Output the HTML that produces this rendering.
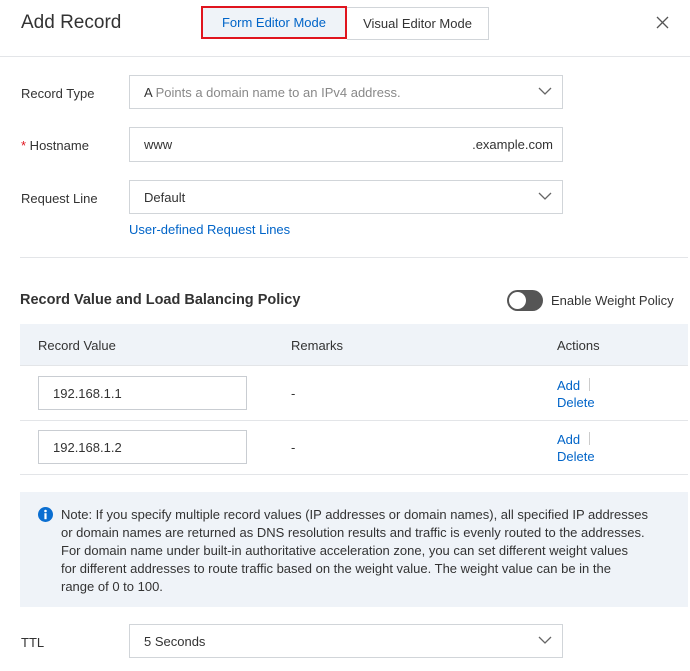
<!DOCTYPE html>
<html><head><style>
*{box-sizing:border-box;margin:0;padding:0}
body{width:690px;height:671px;overflow:hidden;background:#fff;font-family:"Liberation Sans",sans-serif;font-size:13px;color:#333;position:relative}
.a{position:absolute;white-space:nowrap}
.sel{position:absolute;left:129px;width:434px;height:34px;border:1px solid #d1d5d9;background:#fff}
.sel span{position:absolute;left:14px;top:9px}
.chev{position:absolute;right:10px;top:10px;width:14px;height:10px}
.lbl{position:absolute;left:21px}
.link{color:#0064c8}
.inp{position:absolute;left:38px;width:209px;height:34px;border:1px solid #c9cdd2;background:#fff}
.inp span{position:absolute;left:14px;top:9px}
.hr{position:absolute;left:20px;width:668px;height:1px;background:#e3e5e8}
</style></head><body>
<div class="a" style="left:21px;top:12px;font-size:19px;color:#333">Add Record</div>
<div class="a" style="left:347px;top:7px;width:142px;height:33px;border:1px solid #d1d5d9;border-left:none;text-align:center;line-height:31px;color:#333">Visual Editor Mode</div>
<div class="a" style="left:201px;top:6px;width:146px;height:33px;border:2px solid #e0141e;background:#eff3f8;text-align:center;line-height:29px;color:#0064c8">Form Editor Mode</div>
<svg class="a" style="left:656px;top:16px" width="13" height="13" viewBox="0 0 13 13"><path d="M1 1L12 12M12 1L1 12" stroke="#555" stroke-width="1.3"/></svg>
<div class="a" style="left:0;top:56px;width:690px;height:1px;background:#e3e5e8"></div>

<div class="lbl a" style="top:86px">Record Type</div>
<div class="sel" style="top:75px"><span><span style="position:static;color:#333">A</span> <span style="position:static;color:#888">Points a domain name to an IPv4 address.</span></span><svg class="chev" viewBox="0 0 14 10"><path d="M1 2l6 6 6-6" fill="none" stroke="#666" stroke-width="1.3"/></svg></div>

<div class="lbl a" style="top:138px"><span style="color:#e0141e">*</span> Hostname</div>
<div class="sel" style="top:127px;height:35px"><span>www</span><span style="left:auto;right:9px">.example.com</span></div>

<div class="lbl a" style="top:191px">Request Line</div>
<div class="sel" style="top:180px"><span>Default</span><svg class="chev" viewBox="0 0 14 10"><path d="M1 2l6 6 6-6" fill="none" stroke="#666" stroke-width="1.3"/></svg></div>
<div class="a link" style="left:129px;top:222px">User-defined Request Lines</div>
<div class="hr" style="top:257px"></div>

<div class="a" style="left:20px;top:292px;font-size:14.5px;font-weight:bold;color:#333">Record Value and Load Balancing Policy</div>
<div class="a" style="left:507px;top:290px;width:36px;height:21px;border-radius:11px;background:#555"></div>
<div class="a" style="left:509px;top:292px;width:17px;height:17px;border-radius:50%;background:#fff"></div>
<div class="a" style="left:551px;top:293px">Enable Weight Policy</div>

<div class="a" style="left:20px;top:324px;width:668px;height:42px;background:#eff3f8;border-bottom:1px solid #e3e5e8"></div>
<div class="a" style="left:38px;top:338px">Record Value</div>
<div class="a" style="left:291px;top:338px">Remarks</div>
<div class="a" style="left:557px;top:338px">Actions</div>

<div class="inp" style="top:376px"><span>192.168.1.1</span></div>
<div class="a" style="left:291px;top:386px">-</div>
<div class="a link" style="left:557px;top:378px">Add</div>
<div class="a" style="left:589px;top:378px;width:1px;height:13px;background:#ccc"></div>
<div class="a link" style="left:557px;top:395px">Delete</div>
<div class="hr" style="top:420px"></div>

<div class="inp" style="top:430px"><span>192.168.1.2</span></div>
<div class="a" style="left:291px;top:440px">-</div>
<div class="a link" style="left:557px;top:432px">Add</div>
<div class="a" style="left:589px;top:432px;width:1px;height:13px;background:#ccc"></div>
<div class="a link" style="left:557px;top:449px">Delete</div>
<div class="hr" style="top:474px"></div>

<div class="a" style="left:20px;top:492px;width:668px;height:115px;background:#eff3f8"></div>
<svg class="a" style="left:38px;top:507px" width="15" height="15" viewBox="0 0 15 15"><circle cx="7.5" cy="7.5" r="7.5" fill="#0a6ed1"/><circle cx="7.5" cy="4" r="1.3" fill="#fff"/><rect x="6.4" y="6.2" width="2.2" height="6" fill="#fff"/></svg>
<div class="a" style="left:61px;top:506px;line-height:18px;white-space:normal;width:620px">Note: If you specify multiple record values (IP addresses or domain names), all specified IP addresses<br>or domain names are returned as DNS resolution results and traffic is evenly routed to the addresses.<br>For domain name under built-in authoritative acceleration zone, you can set different weight values<br>for different addresses to route traffic based on the weight value. The weight value can be in the<br>range of 0 to 100.</div>

<div class="lbl a" style="top:635px">TTL</div>
<div class="sel" style="top:624px"><span>5 Seconds</span><svg class="chev" viewBox="0 0 14 10"><path d="M1 2l6 6 6-6" fill="none" stroke="#666" stroke-width="1.3"/></svg></div>
</body></html>
